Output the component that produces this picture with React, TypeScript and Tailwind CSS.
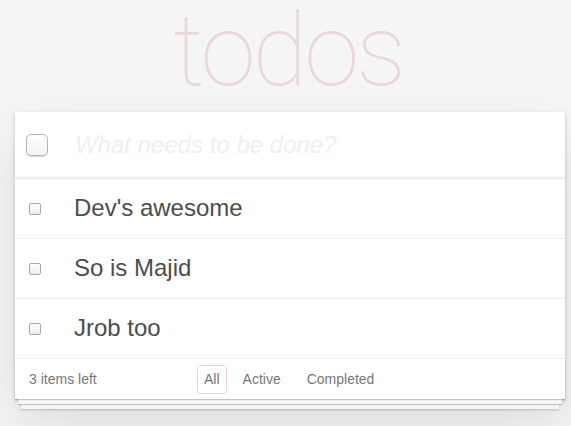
import { useState } from "react";

interface Todo {
  id: number;
  title: string;
  done: boolean;
}

const initialTodos: Todo[] = [
  { id: 1, title: "Dev's awesome", done: false },
  { id: 2, title: "So is Majid", done: false },
  { id: 3, title: "Jrob too", done: false },
];

export default function App() {
  const [todos] = useState<Todo[]>(initialTodos);
  const left = todos.filter((t) => !t.done).length;

  return (
    <div
      className="min-h-screen bg-[#f5f5f5] text-[#4d4d4d]"
      style={{ fontFamily: '"Liberation Sans", Arial, sans-serif' }}
    >
      <div className="ml-[15px] w-[550px]">
        {/* TITLE */}
        <div className="h-[112px]">
          <h1
            className="-translate-y-[8px] pr-[4px] text-center text-[100px] font-thin leading-[118px] tracking-[-3px] text-[rgba(175,47,47,0.15)]"
            style={{ fontFamily: "Roboto, sans-serif" }}
          >
            todos
          </h1>
        </div>

        {/* PANEL */}
        <section className="relative bg-white shadow-[0_2px_4px_0_rgba(0,0,0,0.2),0_25px_50px_0_rgba(0,0,0,0.1)]">
          <header className="flex h-[66px] items-center shadow-[inset_0_-2px_1px_rgba(0,0,0,0.03)]">
            <span className="ml-[11px] h-[22px] w-[22px] shrink-0 rounded-[5px] border border-[#b5b5b5] bg-gradient-to-b from-white to-[#f3f3f3] shadow-[0_1px_1px_rgba(0,0,0,0.15)]" />
            <input
              className="ml-[27px] w-[440px] bg-transparent text-[24px] italic outline-none placeholder:text-[#f0f0f0]"
              placeholder="What needs to be done?"
            />
          </header>

          <ul className="border-t border-[#e6e6e6]">
            {todos.map((todo) => (
              <li
                key={todo.id}
                className="flex h-[60px] items-center border-b border-[#ededed]"
              >
                <span className="ml-[14px] h-[12px] w-[12px] shrink-0 rounded-[2px] border border-[#a9a9a9] bg-gradient-to-b from-white to-[#ededed]" />
                <label className="ml-[33px] text-[24px] leading-[1.2]">
                  {todo.title}
                </label>
              </li>
            ))}
          </ul>

          {/* FOOTER */}
          <footer className="flex h-[40px] items-center px-[14px] text-[14px] text-[#777] shadow-[0_1px_1px_rgba(0,0,0,0.2),0_8px_0_-3px_#f6f6f6,0_9px_1px_-3px_rgba(0,0,0,0.2),0_16px_0_-6px_#f6f6f6,0_17px_2px_-6px_rgba(0,0,0,0.2)]">
            <span className="w-[168px] shrink-0">{left} items left</span>
            <ul className="flex items-center">
              <li className="mr-[3px] rounded-[3px] border border-[rgba(175,47,47,0.2)] px-[6px] py-[3px]">
                All
              </li>
              <li className="mx-[4px] rounded-[3px] border border-transparent px-[8px] py-[3px]">
                Active
              </li>
              <li className="mx-[4px] rounded-[3px] border border-transparent px-[8px] py-[3px]">
                Completed
              </li>
            </ul>
          </footer>
        </section>
      </div>
    </div>
  );
}
